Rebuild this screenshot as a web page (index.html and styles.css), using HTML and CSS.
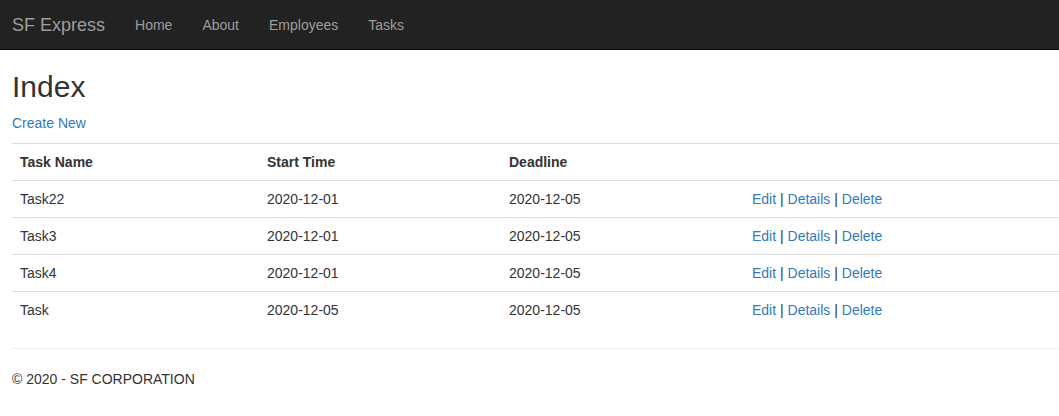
FILE: index.html
```html
<!DOCTYPE html>
<html>
<head>
<meta charset="utf-8">
<title>Index</title>
<link rel="stylesheet" href="styles.css">
</head>
<body>
<div class="navbar">
  <a class="brand" href="#">SF Express</a>
  <ul class="nav">
    <li><a href="#">Home</a></li>
    <li><a href="#">About</a></li>
    <li><a href="#">Employees</a></li>
    <li><a href="#">Tasks</a></li>
  </ul>
</div>
<div class="body-content">
  <h2 class="title">Index</h2>
  <p class="create"><a href="#">Create New</a></p>
  <table class="table">
    <tr>
      <th class="c1">Task Name</th>
      <th class="c2">Start Time</th>
      <th class="c3">Deadline</th>
      <th></th>
    </tr>
    <tr>
      <td>Task22</td><td>2020-12-01</td><td>2020-12-05</td>
      <td><a href="#">Edit</a> | <a href="#">Details</a> | <a href="#">Delete</a></td>
    </tr>
    <tr>
      <td>Task3</td><td>2020-12-01</td><td>2020-12-05</td>
      <td><a href="#">Edit</a> | <a href="#">Details</a> | <a href="#">Delete</a></td>
    </tr>
    <tr>
      <td>Task4</td><td>2020-12-01</td><td>2020-12-05</td>
      <td><a href="#">Edit</a> | <a href="#">Details</a> | <a href="#">Delete</a></td>
    </tr>
    <tr>
      <td>Task</td><td>2020-12-05</td><td>2020-12-05</td>
      <td><a href="#">Edit</a> | <a href="#">Details</a> | <a href="#">Delete</a></td>
    </tr>
  </table>
  <hr class="sep">
  <footer class="footer">
    <p>&copy; 2020 - SF CORPORATION</p>
  </footer>
</div>
</body>
</html>
```
FILE: styles.css
```css
* { box-sizing: border-box; }
html, body { margin: 0; padding: 0; }
body {
  font-family: "Liberation Sans", Arial, Helvetica, sans-serif;
  font-size: 14px;
  line-height: 20px;
  color: #333;
  background: #fff;
}
a { color: #337ab7; text-decoration: none; }

.navbar {
  display: flex;
  align-items: stretch;
  height: 50px;
  background: #222;
  border-bottom: 1px solid #080808;
  padding-left: 12px;
}
.brand {
  font-size: 18px;
  line-height: 20px;
  padding: 15px 15px 14px 0;
  color: #9d9d9d;
}
.nav {
  display: flex;
  list-style: none;
  margin: 0;
  padding: 0;
}
.nav a {
  display: block;
  padding: 15px 15px 14px;
  line-height: 20px;
  color: #9d9d9d;
}

.body-content {
  padding-left: 12px;
  padding-right: 0;
}
.title {
  font-size: 30px;
  font-weight: 500;
  line-height: 33px;
  margin: 20px 0 10px;
}
.create { margin: 0 0 10px; }

.table {
  width: 100%;
  border-collapse: collapse;
  border-spacing: 0;
  margin-bottom: 20px;
}
.table th, .table td {
  padding: 8px;
  line-height: 20px;
  text-align: left;
  vertical-align: top;
  border-top: 1px solid #ddd;
}
.table th { font-weight: bold; }
.c1 { width: 247px; }
.c2 { width: 242px; }
.c3 { width: 243px; }

.sep {
  margin: 20px 0;
  border: 0;
  border-top: 1px solid #eee;
  height: 0;
}
.footer p { margin: 0 0 10px; }
```
